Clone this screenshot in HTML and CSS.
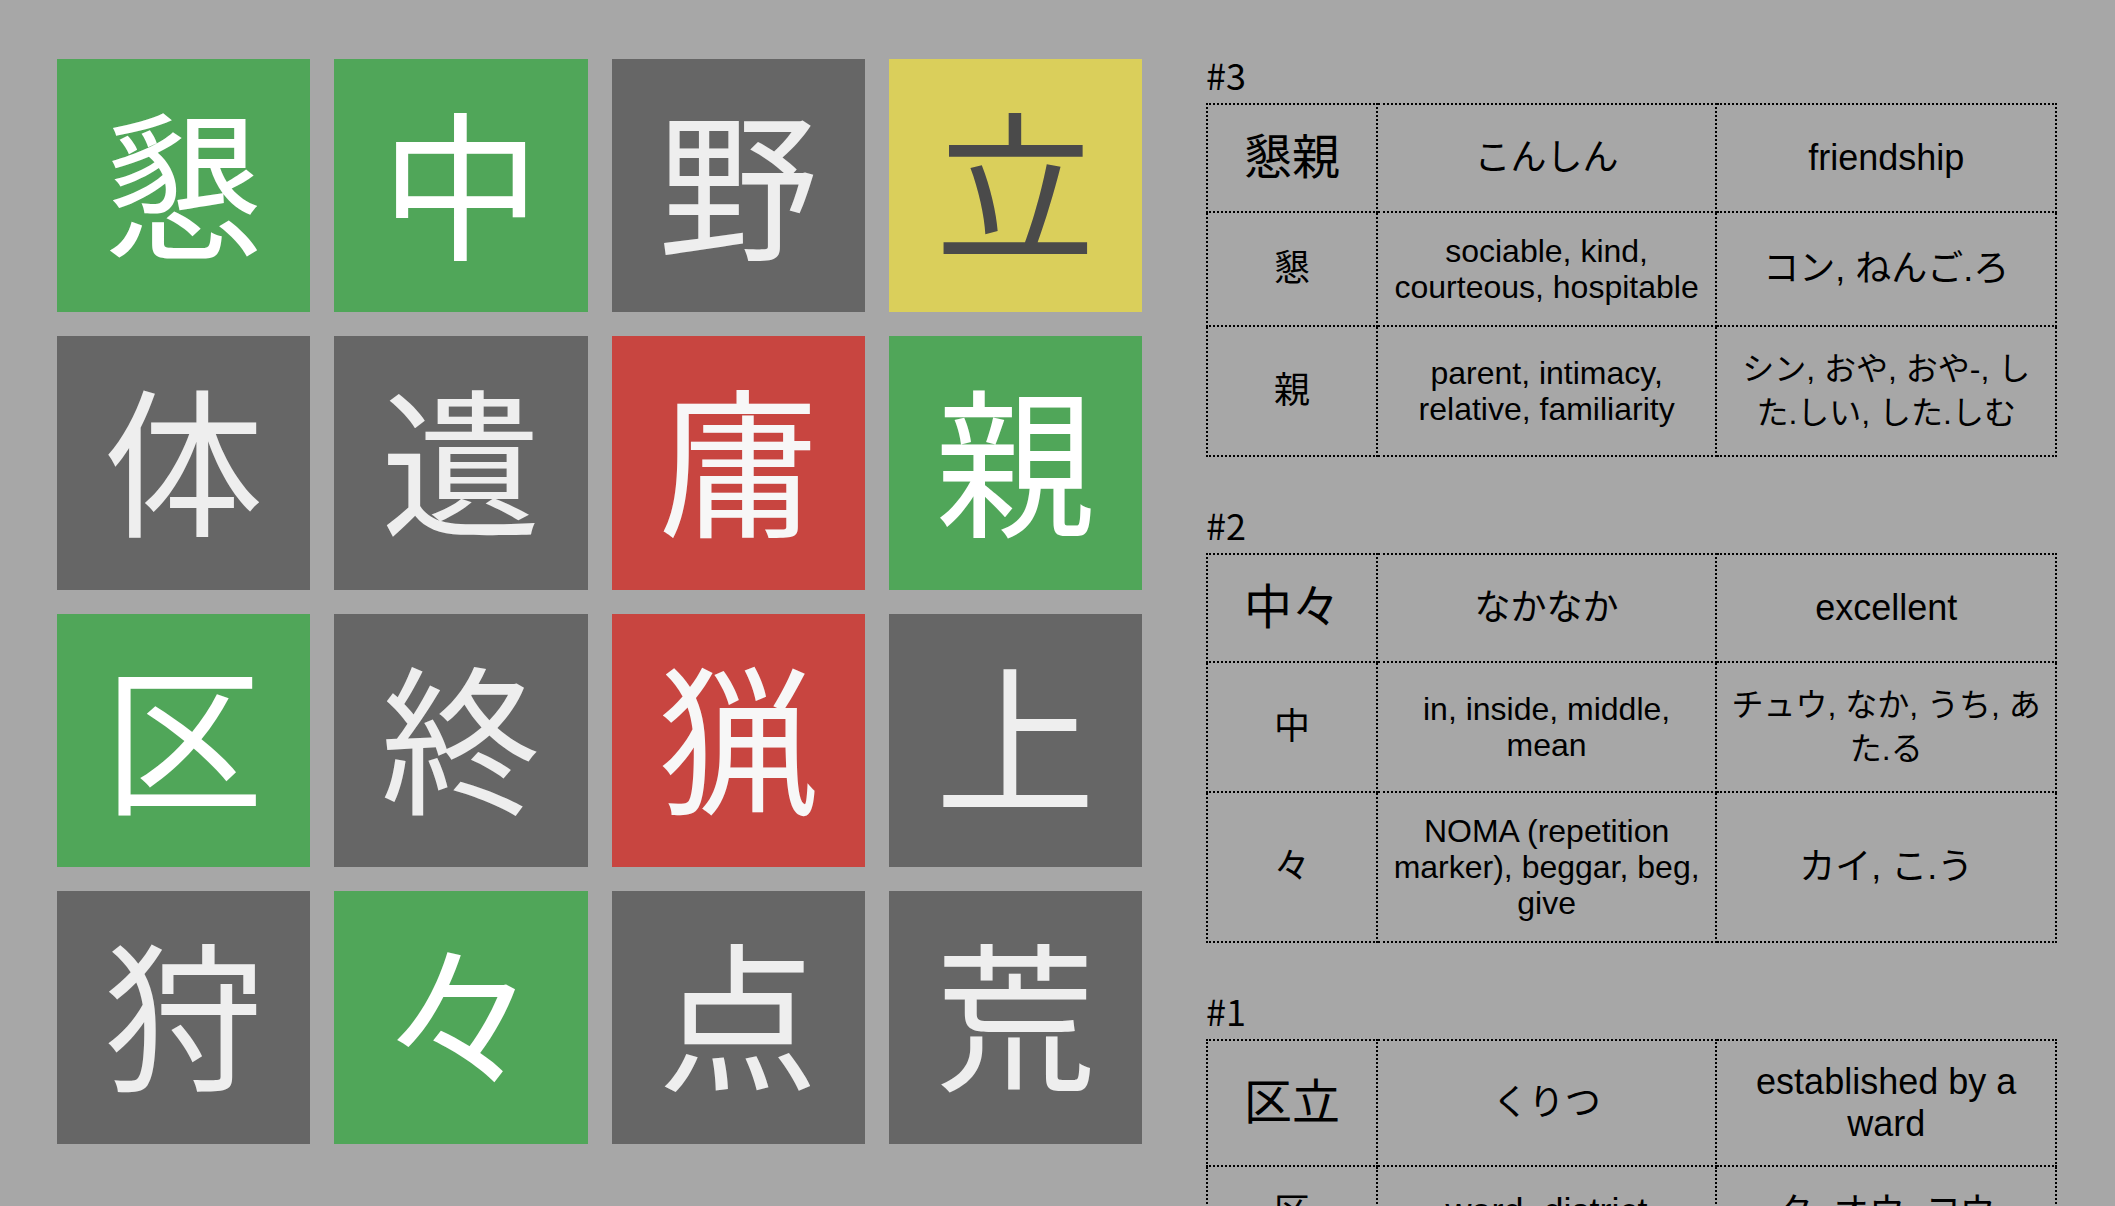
FILE: index.html
```html
<!DOCTYPE html>
<html lang="ja">
<head>
<meta charset="utf-8">
<title>漢字</title>
<link rel="stylesheet" href="styles.css">
</head>
<body>
<main class="game">
  <div class="board">
    <button class="tile found">懇</button>
    <button class="tile found">中</button>
    <button class="tile">野</button>
    <button class="tile selected">立</button>
    <button class="tile">体</button>
    <button class="tile">遺</button>
    <button class="tile wrong">庸</button>
    <button class="tile found">親</button>
    <button class="tile found">区</button>
    <button class="tile">終</button>
    <button class="tile wrong">猟</button>
    <button class="tile">上</button>
    <button class="tile">狩</button>
    <button class="tile found">々</button>
    <button class="tile">点</button>
    <button class="tile">荒</button>
  </div>
  <div class="words">
    <section class="entry">
      <h2 class="number" id="word-3">#3</h2>
      <table class="word" aria-labelledby="word-3">
        <colgroup><col class="col-kanji"><col><col></colgroup>
        <tr><th class="headword">懇親</th><td>こんしん</td><td>friendship</td></tr>
        <tr><th>懇</th><td class="meaning">sociable, kind, courteous, hospitable</td><td>コン, ねんご.ろ</td></tr>
        <tr><th>親</th><td class="meaning">parent, intimacy, relative, familiarity</td><td class="long">シン, おや, おや-, した.しい, した.しむ</td></tr>
      </table>
    </section>
    <section class="entry">
      <h2 class="number" id="word-2">#2</h2>
      <table class="word" aria-labelledby="word-2">
        <colgroup><col class="col-kanji"><col><col></colgroup>
        <tr><th class="headword">中々</th><td>なかなか</td><td>excellent</td></tr>
        <tr><th>中</th><td class="meaning">in, inside, middle, mean</td><td class="long">チュウ, なか, うち, あた.る</td></tr>
        <tr><th>々</th><td class="meaning">NOMA (repetition marker), beggar, beg, give</td><td>カイ, こ.う</td></tr>
      </table>
    </section>
    <section class="entry">
      <h2 class="number" id="word-1">#1</h2>
      <table class="word" aria-labelledby="word-1">
        <colgroup><col class="col-kanji"><col><col></colgroup>
        <tr><th class="headword">区立</th><td>くりつ</td><td class="phrase">established by a ward</td></tr>
        <tr><th>区</th><td>ward, district</td><td>ク, オウ, コウ</td></tr>
      </table>
    </section>
  </div>
</main>
</body>
</html>
```

FILE: styles.css
```css
* {
  box-sizing: border-box;
}

body {
  margin: 0;
  height: 100vh;
  overflow: hidden;
  background: #a7a7a7;
  color: #000;
  font-family: "Liberation Sans", "Noto Sans CJK JP", sans-serif;
  font-size: 36px;
}

.game {
  display: grid;
  grid-template-columns: minmax(0, 1085fr) minmax(0, 851fr);
  gap: 64px;
  align-items: start;
  padding: 59px 58px 59px 57px;
}

.board {
  display: grid;
  grid-template-columns: repeat(4, minmax(0, 1fr));
  gap: 24px;
}

.tile {
  aspect-ratio: 1;
  display: flex;
  align-items: center;
  justify-content: center;
  padding: 0 0 16px;
  border: 0;
  background: #666;
  color: #eee;
  font-family: "Noto Sans CJK JP", sans-serif;
  font-size: 160px;
  line-height: 1;
}

.found {
  background: #50a659;
  color: #fff;
}

.selected {
  background: #dacf5b;
  color: #4a4a4a;
}

.wrong {
  background: #c84540;
  color: #f7f7f7;
}

.words {
  display: flex;
  flex-direction: column;
  gap: 52px;
}

.number {
  margin: 0 0 14px;
  font-family: "Noto Sans CJK JP", sans-serif;
  font-size: 36px;
  font-weight: 400;
  line-height: 30px;
}

.word {
  width: 100%;
  table-layout: fixed;
  border-collapse: collapse;
}

.col-kanji {
  width: 20%;
}

.word th,
.word td {
  padding: 20px 12px;
  border: 2px dotted #000;
  font-weight: 400;
  line-height: 50px;
  text-align: center;
  vertical-align: middle;
}

.word .headword {
  font-size: 48px;
  line-height: 66px;
}

.word .meaning {
  font-size: 32px;
  line-height: 36px;
}

.word .long {
  font-size: 32px;
  line-height: 44px;
}

.word .phrase {
  line-height: 42px;
}
```
